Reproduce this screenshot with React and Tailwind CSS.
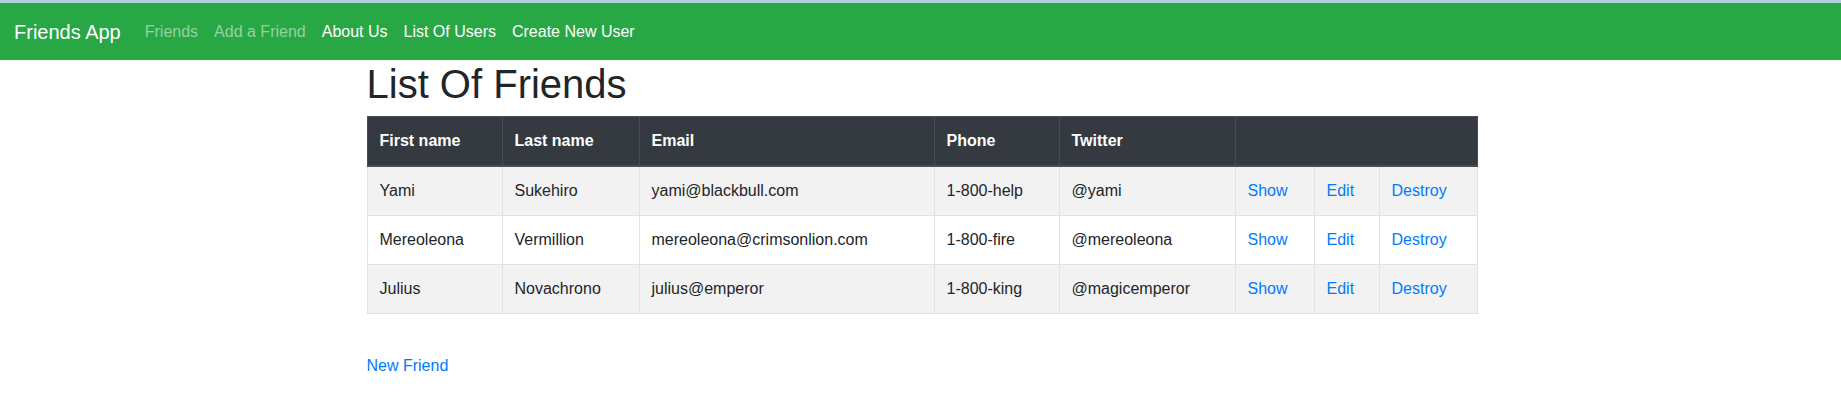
import React from "react";

const friends = [
  { first: "Yami", last: "Sukehiro", email: "yami@blackbull.com", phone: "1-800-help", twitter: "@yami" },
  { first: "Mereoleona", last: "Vermillion", email: "mereoleona@crimsonlion.com", phone: "1-800-fire", twitter: "@mereoleona" },
  { first: "Julius", last: "Novachrono", email: "julius@emperor", phone: "1-800-king", twitter: "@magicemperor" },
];

const NavBar = () => (
  <nav className="flex h-[57px] items-center bg-[#28a745] pl-[14px] pr-4">
    <a href="#" className="mr-4 py-[5px] text-[20px] leading-[30px] text-white">
      Friends App
    </a>
    <div className="flex items-center text-base leading-6">
      <a href="#" className="px-2 py-2 text-white/50">Friends</a>
      <a href="#" className="px-2 py-2 text-white/50">Add a Friend</a>
      <a href="#" className="px-2 py-2 text-white">About Us</a>
      <a href="#" className="px-2 py-2 text-white">List Of Users</a>
      <a href="#" className="px-2 py-2 text-white">Create New User</a>
    </div>
  </nav>
);

const App = () => {
  return (
    <div className="min-h-[403px] bg-white font-['Liberation_Sans',Arial,sans-serif] text-base leading-6 text-[#212529]">
      <div className="h-[3px] bg-[#aed0d9]" />
      <NavBar />

      {/* Main content */}
      <div className="mx-auto max-w-[1140px] pl-[16px] pr-[14px]">
        <h1 className="mb-2 text-[40px] font-medium leading-[1.2]">List Of Friends</h1>

        <table className="mb-4 w-full table-fixed border-collapse border border-[#dee2e6]">
          <colgroup>
            <col className="w-[135px]" />
            <col className="w-[137px]" />
            <col className="w-[295px]" />
            <col className="w-[125px]" />
            <col className="w-[176px]" />
            <col className="w-[79px]" />
            <col className="w-[65px]" />
            <col className="w-[98px]" />
          </colgroup>
          <thead>
            <tr className="bg-[#343a40] text-left text-white">
              <th className="border border-b-2 border-[#454d55] p-3 font-bold">First name</th>
              <th className="border border-b-2 border-[#454d55] p-3 font-bold">Last name</th>
              <th className="border border-b-2 border-[#454d55] p-3 font-bold">Email</th>
              <th className="border border-b-2 border-[#454d55] p-3 font-bold">Phone</th>
              <th className="border border-b-2 border-[#454d55] p-3 font-bold">Twitter</th>
              <th colSpan={3} className="border border-b-2 border-[#454d55] p-3" />
            </tr>
          </thead>
          <tbody>
            {friends.map((f, i) => (
              <tr key={f.first} className={i % 2 === 0 ? "bg-[#f2f2f2]" : "bg-white"}>
                <td className="border border-[#dee2e6] p-3">{f.first}</td>
                <td className="border border-[#dee2e6] p-3">{f.last}</td>
                <td className="border border-[#dee2e6] p-3">{f.email}</td>
                <td className="border border-[#dee2e6] p-3">{f.phone}</td>
                <td className="border border-[#dee2e6] p-3">{f.twitter}</td>
                <td className="border border-[#dee2e6] p-3">
                  <a href="#" className="text-[#007bff]">Show</a>
                </td>
                <td className="border border-[#dee2e6] p-3">
                  <a href="#" className="text-[#007bff]">Edit</a>
                </td>
                <td className="border border-[#dee2e6] p-3">
                  <a href="#" className="text-[#007bff]">Destroy</a>
                </td>
              </tr>
            ))}
          </tbody>
        </table>

        <br />
        <a href="#" className="text-[#007bff]">New Friend</a>
      </div>
    </div>
  );
};

export default App;
